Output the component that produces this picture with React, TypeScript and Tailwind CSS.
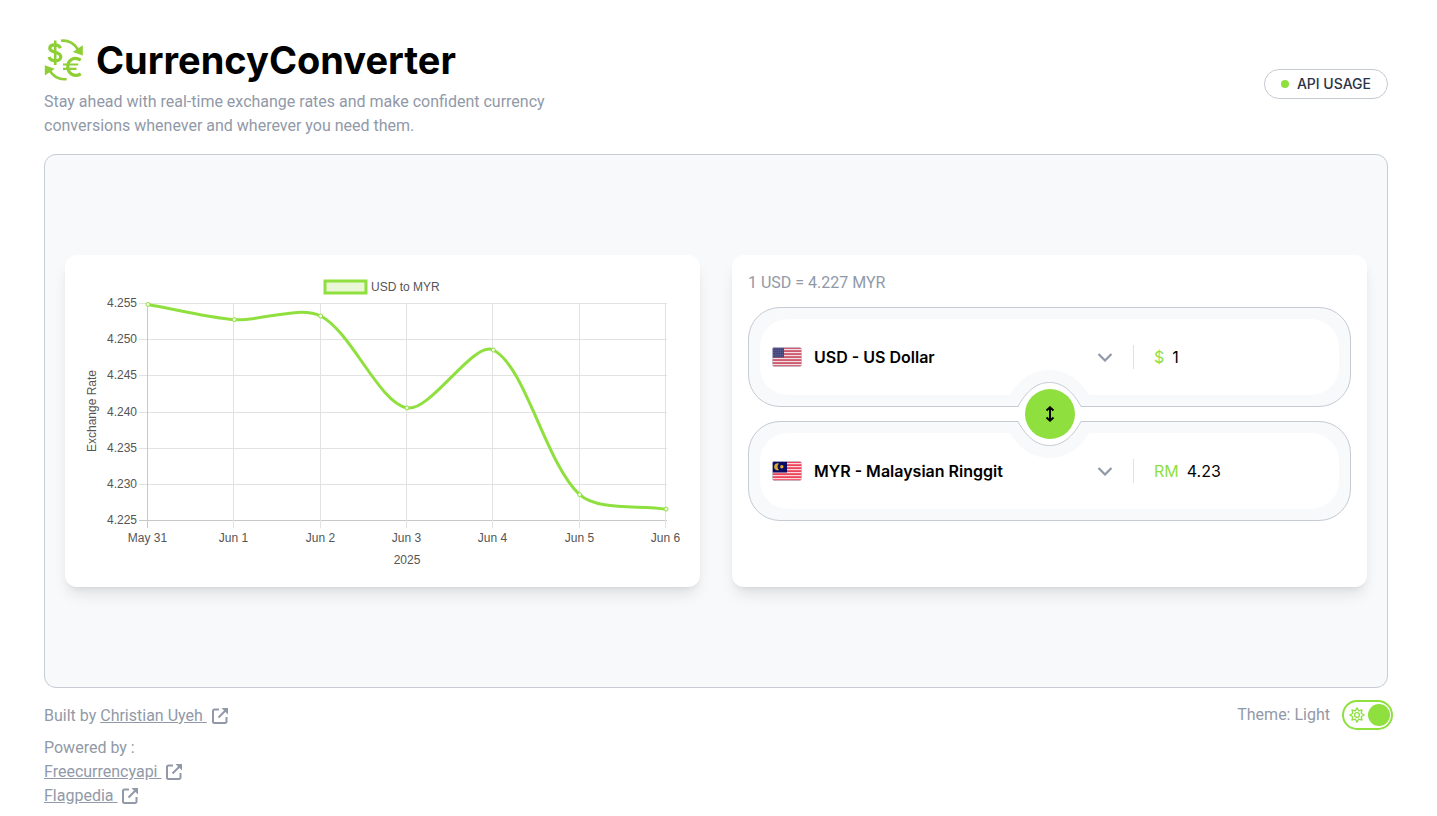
import { useState } from "react";

const days = ["May 31", "Jun 1", "Jun 2", "Jun 3", "Jun 4", "Jun 5", "Jun 6"];
const rates = [4.2548, 4.2527, 4.2532, 4.2405, 4.2485, 4.2285, 4.2265];
const ticks = ["4.255", "4.250", "4.245", "4.240", "4.235", "4.230", "4.225"];

const plot = { left: 67, right: 585, top: 32, bottom: 249 };
const xAt = (i: number) => plot.left + ((plot.right - plot.left) * i) / (days.length - 1);
const yAt = (rate: number) => plot.top + ((4.255 - rate) / 0.03) * (plot.bottom - plot.top);

function smoothPath(points: { x: number; y: number }[], tension: number) {
  const controls = points.map((p, i) => {
    const prev = points[i - 1] ?? p;
    const next = points[i + 1] ?? p;
    const d01 = Math.hypot(p.x - prev.x, p.y - prev.y);
    const d12 = Math.hypot(next.x - p.x, next.y - p.y);
    const a = (tension * d01) / (d01 + d12);
    const b = (tension * d12) / (d01 + d12);
    return {
      inX: p.x - a * (next.x - prev.x),
      inY: p.y - a * (next.y - prev.y),
      outX: p.x + b * (next.x - prev.x),
      outY: p.y + b * (next.y - prev.y),
    };
  });
  return points
    .map((p, i) =>
      i === 0
        ? `M${p.x} ${p.y}`
        : `C${controls[i - 1].outX} ${controls[i - 1].outY} ${controls[i].inX} ${controls[i].inY} ${p.x} ${p.y}`,
    )
    .join("");
}

function RateChart() {
  const points = rates.map((rate, i) => ({ x: xAt(i), y: yAt(rate) }));
  return (
    <svg
      viewBox="0 0 603 300"
      role="img"
      aria-label="USD to MYR"
      className="block w-full font-['Liberation_Sans',Arial,sans-serif] text-[12px]"
    >
      <rect x="244" y="10" width="41" height="12" fill="#e9f7d6" stroke="#8fe03f" strokeWidth="3" />
      <text x="290" y="20" fill="#555">USD to MYR</text>
      {ticks.map((label, i) => {
        const y = Math.round(plot.top + ((plot.bottom - plot.top) * i) / 6) + 0.5;
        return (
          <g key={label}>
            <line x1="58" x2="586" y1={y} y2={y} stroke={i === 6 ? "#c8c8c8" : "#e2e2e2"} />
            <text x="56" y={y + 3} textAnchor="end" fill="#555">{label}</text>
          </g>
        );
      })}
      {days.map((label, i) => {
        const x = Math.round(xAt(i)) - 0.5;
        return (
          <g key={label}>
            <line x1={x} x2={x} y1="32" y2="257" stroke={i === 0 ? "#c8c8c8" : "#e2e2e2"} />
            <text x={x} y="271" textAnchor="middle" fill="#555">{label}</text>
          </g>
        );
      })}
      <text x="326" y="293" textAnchor="middle" fill="#555">2025</text>
      <text transform="translate(15 140) rotate(-90)" textAnchor="middle" fill="#555">Exchange Rate</text>
      <path d={smoothPath(points, 0.3)} fill="none" stroke="#8fe03f" strokeWidth="3" />
      {points.map((p) => (
        <circle key={p.x} cx={p.x} cy={p.y} r="2" fill="#f2fbe7" stroke="#8fe03f" />
      ))}
    </svg>
  );
}

function Logo() {
  return (
    <svg viewBox="0 0 40 42" aria-hidden="true" className="h-[42px] w-10" fill="none" stroke="#8dcf35">
      <path d="M17 1.800C24 .6 31 4.500 34.800 12" strokeWidth="2.600" />
      <path d="M38.800 6.200v10.200L28.800 13z" fill="#8dcf35" stroke="none" />
      <path d="M22.600 40C15.500 41.200 8 37 5 30" strokeWidth="2.600" />
      <path d="M.8 36.600v-10.400l10 3.600z" fill="#8dcf35" stroke="none" />
      <path d="M16.300 9.200C15 4.800 6 4.500 5.800 9.300 5.700 14.500 16.800 12 16.800 17.800 16.800 23 7 23.200 5 18" strokeWidth="3.300" />
      <path d="M11.200 1.500v24.500" strokeWidth="2.600" />
      <path d="M36.800 21.200C30 17 23.800 21 23.800 27.500s6 11.500 13 7.300" strokeWidth="3.200" />
      <path d="M19 25.500h15.200M19 29.800h13.500" strokeWidth="2.200" />
    </svg>
  );
}

function ExternalIcon() {
  return (
    <svg viewBox="0 0 18 18" aria-hidden="true" className="h-[18px] w-[18px]" fill="none" stroke="currentColor" strokeWidth="2">
      <path d="M8 2.500H3.500a1.500 1.500 0 0 0-1.500 1.500v10.500a1.500 1.500 0 0 0 1.500 1.500H14a1.500 1.500 0 0 0 1.500-1.500V10" />
      <path d="M7.500 10.500 15 3" />
      <path d="M10.500 1H17v6.500z" fill="currentColor" stroke="none" />
    </svg>
  );
}

function OutLink({ href, children }: { href: string; children: string }) {
  return (
    <a href={href} className="inline-flex items-center gap-1 align-top">
      <span className="whitespace-pre underline">{children + " "}</span>
      <ExternalIcon />
    </a>
  );
}

function UsFlag() {
  return (
    <svg viewBox="0 0 30 20" aria-hidden="true" className="h-5 w-[30px] rounded-sm">
      <rect width="30" height="20" fill="#f3dfe3" />
      {[0, 3, 6, 9, 12, 15, 18].map((y) => (
        <rect key={y} y={y + 0.3} width="30" height="1.500" fill="#c43a52" />
      ))}
      <rect width="12" height="10.500" fill="#46467f" />
      {[1.5, 3.5, 5.5, 7.5, 9].map((y) => (
        <path key={y} d={`M1 ${y}h10`} stroke="#7b7ca8" strokeWidth=".6" strokeDasharray=".8 1" />
      ))}
      <rect x=".5" y=".5" width="29" height="19" rx="1.500" fill="none" stroke="#c5cad3" strokeOpacity=".8" />
    </svg>
  );
}

function MyFlag() {
  return (
    <svg viewBox="0 0 30 20" aria-hidden="true" className="h-5 w-[30px] rounded-sm">
      <rect width="30" height="20" fill="#fbd5da" />
      {[0, 3, 6, 9, 12, 15, 18].map((y) => (
        <rect key={y} y={y + 0.3} width="30" height="1.600" fill="#e8344c" />
      ))}
      <rect width="15" height="11.500" fill="#0b0b63" />
      <path d="M7 2.600a3.500 3.500 0 1 0 0 6.400 4.200 4.200 0 0 1 0-6.400z" fill="#d9a936" />
      <circle cx="9.800" cy="5.800" r="1.700" fill="#e0a92e" />
      <rect x=".5" y=".5" width="29" height="19" rx="1.500" fill="none" stroke="#c5cad3" strokeOpacity=".8" />
    </svg>
  );
}

function CurrencyRow(props: {
  id: string;
  flag: React.ReactNode;
  name: string;
  symbol: string;
  value: string;
}) {
  return (
    <div className="rounded-[32px] border border-[#c5cad3] bg-[#f8f9fb] p-[11px] font-['Inter','Liberation_Sans',sans-serif]">
      <div className="flex h-[76px] items-center rounded-[28px] bg-white pr-4 pl-3">
        <button
          type="button"
          aria-haspopup="listbox"
          className="flex min-w-0 flex-1 items-center gap-3 text-left font-semibold text-black"
        >
          {props.flag}
          <span className="flex-1 truncate">{props.name}</span>
          <svg viewBox="0 0 16 10" aria-hidden="true" className="h-[10px] w-4" fill="none" stroke="#9199a8" strokeWidth="2.200">
            <path d="M1.500 2 8 8.500 14.500 2" />
          </svg>
        </button>
        <div className="ml-5 flex h-6 w-[190px] items-center gap-2 border-l border-[#dfe1e5] pl-5">
          <label htmlFor={props.id} className="text-[#8fe03f]">{props.symbol}</label>
          <input id={props.id} defaultValue={props.value} className="w-full min-w-0 bg-transparent text-black outline-none" />
        </div>
      </div>
    </div>
  );
}

function SwapControl() {
  return (
    <div className="absolute top-1/2 left-1/2 flex h-[88px] w-20 -translate-x-1/2 -translate-y-1/2 items-center justify-center">
      <svg viewBox="0 0 80 88" aria-hidden="true" className="absolute inset-0 h-full w-full">
        {[1, -1].map((dir) => (
          <g key={dir} transform={dir === 1 ? undefined : "matrix(1 0 0 -1 0 88)"}>
            <path d="M0 25C9 9 23 0 39.500 0S70 9 79 25v11H0z" fill="#f8f9fb" />
            <path d="M8 36.500C16.500 21 26.500 12.500 39.500 12.500S62.500 21 71 36.500V44H8z" fill="#fff" />
            <path d="M0 36.500H8C16.500 21 26.500 12.500 39.500 12.500S62.500 21 71 36.500H80" fill="none" stroke="#c5cad3" />
          </g>
        ))}
      </svg>
      <button
        type="button"
        aria-label="Swap currencies"
        className="relative flex h-[50px] w-[50px] items-center justify-center rounded-full bg-[#8fe03f]"
      >
        <svg viewBox="0 0 10 16" aria-hidden="true" className="h-4 w-[10px]" fill="none" stroke="#000" strokeWidth="2">
          <path d="M5 1.500v13M1.500 4.500 5 1.300l3.500 3.200M1.500 11.500 5 14.700l3.500-3.200" />
        </svg>
      </button>
    </div>
  );
}

function SunIcon() {
  return (
    <svg viewBox="0 0 16 16" aria-hidden="true" className="h-4 w-4" fill="none" stroke="#8fe03f" strokeWidth="1.300" strokeLinejoin="round">
      <path d="M8 .9 9.700 3.800 13 3 12.200 6.300 15.100 8 12.200 9.700 13 13 9.700 12.200 8 15.100 6.300 12.200 3 13 3.800 9.700.9 8 3.800 6.300 3 3 6.300 3.800z" />
      <circle cx="8" cy="8" r="2.400" />
    </svg>
  );
}

export default function App() {
  const [light, setLight] = useState(true);
  return (
    <div className="min-h-screen bg-white pt-[34px] pr-[49px] pl-11 font-['Roboto','Liberation_Sans',sans-serif] text-base leading-6 text-[#9199a8]">
      <header className="flex items-center justify-between">
        <div className="max-w-[560px]">
          <div className="mb-1 flex h-[52px] items-center gap-3">
            <Logo />
            <h1 className="font-['Inter','Liberation_Sans',sans-serif] text-[38px] leading-[48px] font-bold text-black">
              CurrencyConverter
            </h1>
          </div>
          <p>
            Stay ahead with real-time exchange rates and make confident currency
            <br />
            conversions whenever and wherever you need them.
          </p>
        </div>
        <button
          type="button"
          className="mb-1 flex h-[30px] items-center gap-2 rounded-full border border-[#c5cad3] px-4 font-['Inter','Liberation_Sans',sans-serif] text-sm font-medium text-[#2b3445]"
        >
          <span className="h-2 w-2 rounded-full bg-[#8fe03f]" />
          API USAGE
        </button>
      </header>

      <main className="mt-4 flex min-h-[534px] items-center rounded-xl border border-[#c5cad3] bg-[#f8f9fb] px-5">
        <div className="grid w-full grid-cols-2 gap-8">
          <section className="rounded-xl bg-white p-4 shadow-lg">
            <RateChart />
          </section>
          <section className="rounded-xl bg-white p-4 shadow-lg">
            <p>1 USD = 4.227 MYR</p>
            <div className="relative mt-3 flex flex-col gap-[14px]">
              <CurrencyRow id="from" flag={<UsFlag />} name="USD - US Dollar" symbol="$" value="1" />
              <CurrencyRow id="to" flag={<MyFlag />} name="MYR - Malaysian Ringgit" symbol="RM" value="4.23" />
              <SwapControl />
            </div>
          </section>
        </div>
      </main>

      <footer className="flex items-start justify-between pt-4">
        <div>
          <p>
            Built by <OutLink href="#author">Christian Uyeh</OutLink>
          </p>
          <p className="mt-2">Powered by :</p>
          <ul>
            <li><OutLink href="#freecurrencyapi">Freecurrencyapi</OutLink></li>
            <li><OutLink href="#flagpedia">Flagpedia</OutLink></li>
          </ul>
        </div>
        <div className="-mt-1 -mr-[5px] flex items-center gap-3">
          <span>Theme: {light ? "Light" : "Dark"}</span>
          <button
            type="button"
            role="switch"
            aria-checked={light}
            aria-label="Light theme"
            onClick={() => setLight(!light)}
            className="flex h-[30px] w-[51px] items-center justify-between rounded-full border-2 border-[#8fe03f] pr-px pl-[5px]"
          >
            <SunIcon />
            <span className="h-[22px] w-[22px] rounded-full bg-[#8fe03f]" />
          </button>
        </div>
      </footer>
    </div>
  );
}
